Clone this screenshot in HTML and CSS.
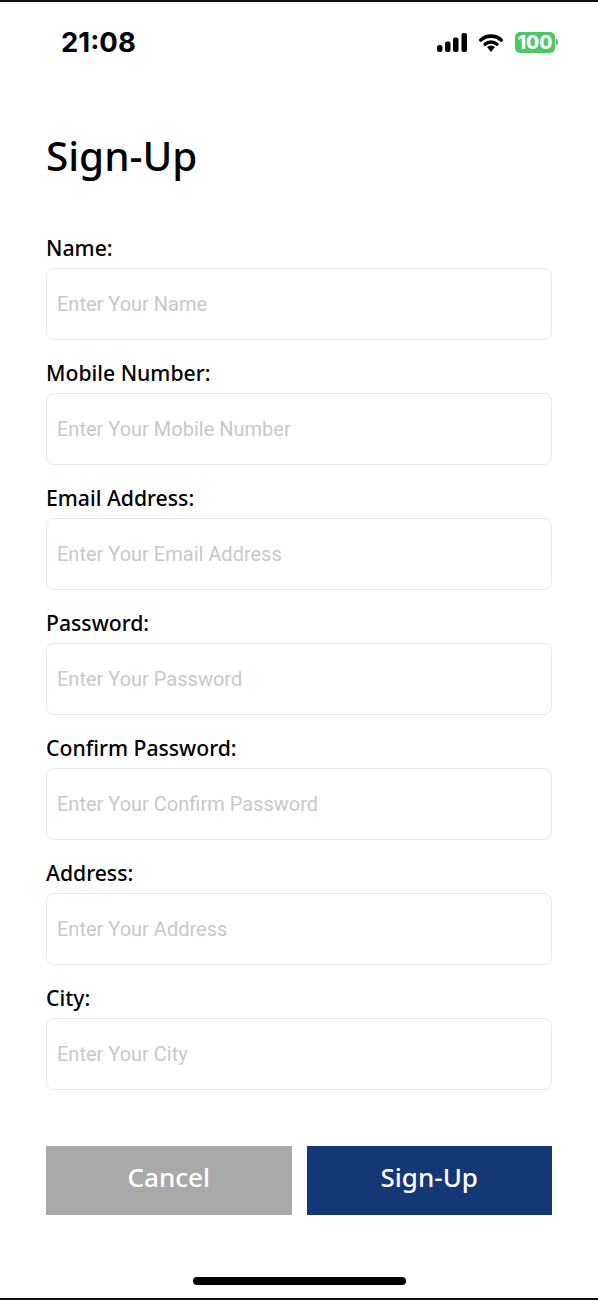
FILE: index.html
```html
<!DOCTYPE html>
<html lang="en">
<head>
    <meta charset="UTF-8">
    <meta name="viewport" content="width=device-width, initial-scale=1.0">
    <title>Sign-Up</title>
    <link rel="stylesheet" href="styles.css">
</head>
<body>

<div class="screen">
    <div class="status-bar">
        <span class="time">21:08</span>
        <div class="status-icons">
            <svg class="signal" width="30" height="19" viewBox="0 0 30 19">
                <rect x="0" y="12" width="5.500" height="7" rx="2.500" fill="#000"/>
                <rect x="8" y="8.500" width="5.500" height="10.500" rx="2" fill="#000"/>
                <rect x="16" y="4.500" width="5.500" height="14.500" rx="2" fill="#000"/>
                <rect x="24.500" y="0" width="5.500" height="19" rx="2" fill="#000"/>
            </svg>
            <svg class="wifi" width="24" height="19" viewBox="0 0 24 19">
                <path d="M1.800 7C7.500 1.800 16.500 1.800 22.200 7" fill="none" stroke="#000" stroke-width="3.600" stroke-linecap="round"/>
                <path d="M6 11.200C9.500 8.200 14.500 8.200 18 11.200" fill="none" stroke="#000" stroke-width="3.400" stroke-linecap="round"/>
                <path d="M8 14C10.500 12 13.500 12 16 14L12 19Z" fill="#000"/>
            </svg>
            <div class="battery"><span class="battery-level">100</span><span class="battery-cap"></span></div>
        </div>
    </div>

    <h1>Sign-Up</h1>

    <form class="form">
        <div class="field">
            <label>Name:</label>
            <input type="text" placeholder="Enter Your Name">
        </div>
        <div class="field">
            <label>Mobile Number:</label>
            <input type="text" placeholder="Enter Your Mobile Number">
        </div>
        <div class="field">
            <label>Email Address:</label>
            <input type="text" placeholder="Enter Your Email Address">
        </div>
        <div class="field">
            <label>Password:</label>
            <input type="text" placeholder="Enter Your Password">
        </div>
        <div class="field">
            <label>Confirm Password:</label>
            <input type="text" placeholder="Enter Your Confirm Password">
        </div>
        <div class="field">
            <label>Address:</label>
            <input type="text" placeholder="Enter Your Address">
        </div>
        <div class="field">
            <label>City:</label>
            <input type="text" placeholder="Enter Your City">
        </div>

        <div class="buttons">
            <button type="button" class="cancel">Cancel</button>
            <button type="button" class="submit">Sign-Up</button>
        </div>
    </form>

    <div class="home-indicator"></div>
</div>

</body>
</html>
```

FILE: styles.css
```css
body {
    margin: 0;
    background-color: #fff;
    font-family: "Noto Sans", sans-serif;
}

.screen {
    height: 1300px;
    box-sizing: border-box;
    border-top: 2px solid #111;
    border-bottom: 2px solid #111;
    display: flex;
    flex-direction: column;
    overflow: hidden;
}

.status-bar {
    display: flex;
    justify-content: space-between;
    align-items: center;
    height: 78px;
    padding: 0 40px 0 61px;
}

.time {
    padding-top: 2px;
    font-family: Inter, sans-serif;
    font-size: 27.5px;
    font-weight: 700;
    color: #000;
}

.status-icons {
    display: flex;
    align-items: center;
    gap: 12px;
    padding-top: 2px;
}

.battery {
    display: flex;
    align-items: center;
    gap: 1px;
}

.battery-level {
    width: 40px;
    height: 21px;
    border-radius: 5px;
    background-color: #4cc764;
    color: #fff;
    font-family: Inter, sans-serif;
    font-size: 19px;
    font-weight: 800;
    line-height: 21px;
    text-align: center;
}

.battery-cap {
    width: 2px;
    height: 6px;
    border-radius: 0 2px 2px 0;
    background-color: #4cc764;
}

h1 {
    margin: 45px 0 0 46px;
    height: 62px;
    font-size: 40.400px;
    font-weight: 500;
    line-height: 62px;
    color: #000;
}

.form {
    display: flex;
    flex-direction: column;
    padding: 0 46px;
    margin-top: 28px;
}

.field {
    display: flex;
    flex-direction: column;
    justify-content: flex-end;
    height: 125px;
}

label {
    height: 24px;
    margin-bottom: 8px;
    font-size: 21.200px;
    font-weight: 500;
    line-height: 24px;
    color: #000;
}

input {
    height: 72px;
    box-sizing: border-box;
    padding: 0 10px;
    border: 1px solid #e8e8e8;
    border-radius: 8px;
    font-family: Roboto, sans-serif;
    font-size: 20px;
    outline: none;
}

input::placeholder {
    color: #c8c8c8;
}

.buttons {
    display: flex;
    gap: 15px;
    margin-top: 56px;
}

button {
    flex: 1;
    height: 69px;
    padding: 0 0 7px;
    border: none;
    color: #fff;
    font-family: "Noto Sans", sans-serif;
    font-size: 26px;
    font-weight: 500;
}

.cancel {
    background-color: #a9a9a9;
}

.submit {
    background-color: #143776;
}

.home-indicator {
    width: 213px;
    height: 8px;
    margin: 62px auto 0;
    border-radius: 4px;
    background-color: #000;
}
```
